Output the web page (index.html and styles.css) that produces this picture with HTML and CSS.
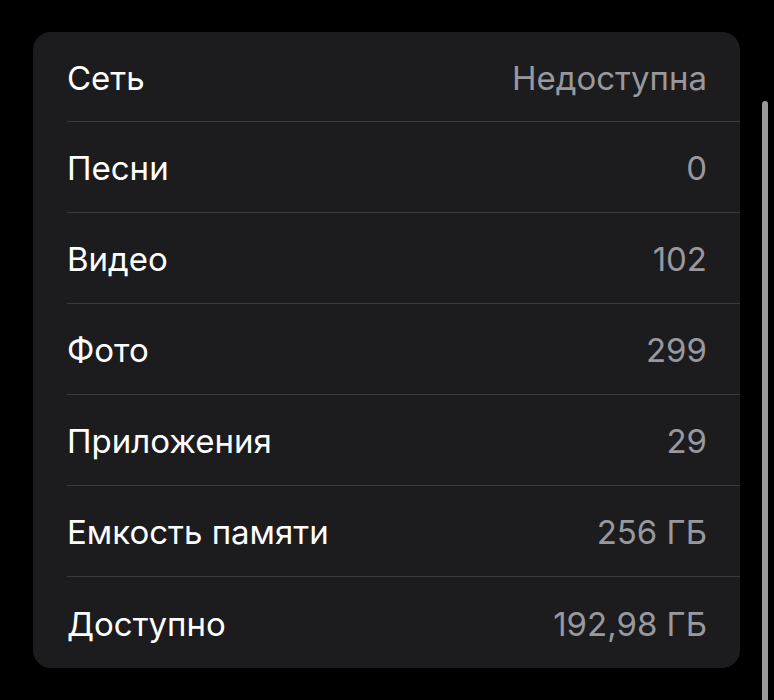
FILE: index.html
```html
<!DOCTYPE html>
<html lang="ru">
<head>
<meta charset="utf-8">
<link rel="stylesheet" href="styles.css">
</head>
<body>
<div class="screen">
  <div class="card">
    <div class="row"><span class="label">Сеть</span><span class="value">Недоступна</span></div>
    <div class="row"><span class="label">Песни</span><span class="value">0</span></div>
    <div class="row"><span class="label">Видео</span><span class="value">102</span></div>
    <div class="row"><span class="label">Фото</span><span class="value">299</span></div>
    <div class="row"><span class="label">Приложения</span><span class="value">29</span></div>
    <div class="row"><span class="label">Емкость памяти</span><span class="value">256 ГБ</span></div>
    <div class="row"><span class="label">Доступно</span><span class="value">192,98 ГБ</span></div>
  </div>
  <div class="scrollbar"></div>
</div>
</body>
</html>
```
FILE: styles.css
```css
html, body {
  margin: 0;
  padding: 0;
  background: #000;
}
.screen {
  position: relative;
  width: 774px;
  height: 700px;
  overflow: hidden;
  padding: 32px 0 0 33px;
  box-sizing: border-box;
}
.card {
  width: 707px;
  background: #1c1c1e;
  border-radius: 18px;
  padding-left: 34px;
  box-sizing: border-box;
  font-family: Inter, "Liberation Sans", sans-serif;
}
.row {
  height: 91px;
  display: flex;
  align-items: center;
  justify-content: space-between;
  padding-right: 33px;
  padding-top: 2px;
  border-bottom: 1px solid #3a3a3c;
  box-sizing: border-box;
}
.row:first-child {
  height: 90px;
}
.row:last-child {
  border-bottom: none;
}
.label {
  color: #ffffff;
  font-size: 33px;
}
.value {
  color: #98989f;
  font-size: 33px;
}
.scrollbar {
  position: absolute;
  left: 762px;
  top: 101px;
  width: 6px;
  height: 620px;
  border-radius: 3px;
  background: #9a9a9c;
}
```
